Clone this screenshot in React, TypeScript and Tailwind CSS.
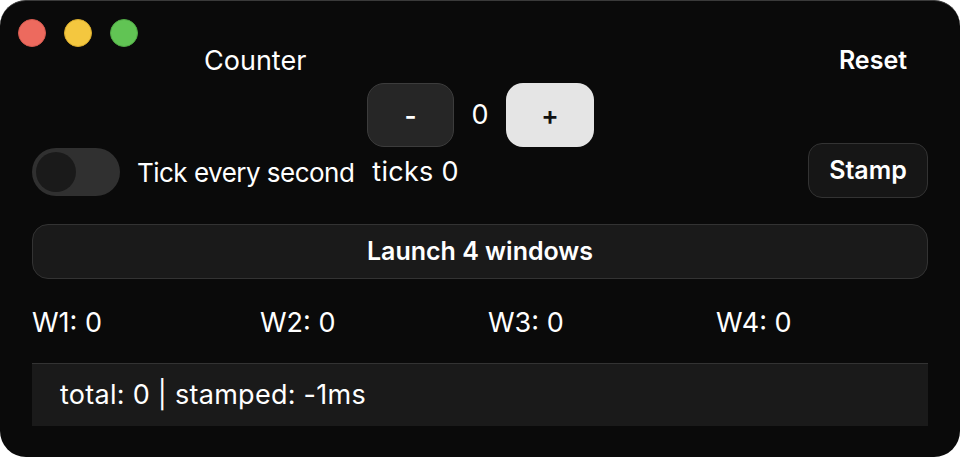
const windows = [
  { id: 1, label: "W1", count: 0 },
  { id: 2, label: "W2", count: 0 },
  { id: 3, label: "W3", count: 0 },
  { id: 4, label: "W4", count: 0 },
];

const TrafficLights = () => (
  <div className="flex gap-[18px] pl-[18px] pt-[18px]">
    <span className="w-[28px] h-[28px] rounded-full bg-[#ed6a5e] border border-[#d65a4f]" />
    <span className="w-[28px] h-[28px] rounded-full bg-[#f4c73f] border border-[#d8ab2c]" />
    <span className="w-[28px] h-[28px] rounded-full bg-[#61c454] border border-[#4fa944]" />
  </div>
);

const App = () => {
  return (
    <div
      className="w-[960px] h-[458px] bg-white overflow-hidden"
      style={{ fontFamily: "Inter, 'Noto Sans', sans-serif" }}
    >
      <div className="w-[960px] h-[457px] bg-[#0a0a0a] rounded-[26px] border-t border-[#3a3a3a] text-white flex flex-col">
        <div className="h-[36px] -mb-[36px]">
          <TrafficLights />
        </div>

        {/* header: title and reset */}
        <div className="flex items-center justify-between pt-[44px] pl-[204px] pr-[53px]">
          <h1 className="text-[27px] leading-[32px]">Counter</h1>
          <button className="text-[25px] leading-[30px] font-semibold -mt-[3px]">Reset</button>
        </div>

        {/* counter controls */}
        <div className="flex items-center justify-center gap-[17px] mt-[6px] ml-[1px]">
          <button className="w-[87px] h-[64px] rounded-[17px] bg-[#262626] border border-[#3c3c3c] text-[26px] font-semibold">
            -
          </button>
          <span className="text-[27px] w-[18px] text-center">0</span>
          <button className="w-[88px] h-[64px] rounded-[17px] bg-[#e5e5e5] text-[#111] text-[26px] font-semibold">
            +
          </button>
        </div>

        {/* ticker row */}
        <div className="flex items-center px-[32px] -mt-[1px]">
          <div className="w-[88px] h-[48px] rounded-full bg-[#303030] flex items-center px-[4px]">
            <span className="w-[40px] h-[40px] rounded-full bg-[#1a1a1a]" />
          </div>
          <span className="ml-[17px] text-[26px] tracking-[-0.02em]">Tick every second</span>
          <span className="ml-[18px] text-[27px] tracking-[0.01em]">ticks 0</span>
          <button className="ml-auto -mt-[3px] w-[120px] h-[55px] rounded-[14px] bg-[#161616] border border-[#333] text-[25px] font-semibold">
            Stamp
          </button>
        </div>

        {/* launcher */}
        <div className="px-[32px] mt-[26px]">
          <button className="w-full h-[55px] rounded-[16px] bg-[#1a1a1a] border border-[#333] text-[25px] font-semibold">
            Launch 4 windows
          </button>
        </div>

        {/* per-window counts */}
        <div className="grid grid-cols-4 gap-4 px-[32px] mt-[28px]">
          {windows.map((w) => (
            <span key={w.id} className="text-[27px] leading-[32px]">
              {w.label}: {w.count}
            </span>
          ))}
        </div>

        {/* status bar */}
        <div className="mx-[32px] mt-[24px] h-[63px] bg-[#1a1a1a] border-t border-[#333] flex items-center px-[28px]">
          <span className="text-[27px] tracking-[0.01em]">total: 0 | stamped: -1ms</span>
        </div>
      </div>
    </div>
  );
};

export default App;
